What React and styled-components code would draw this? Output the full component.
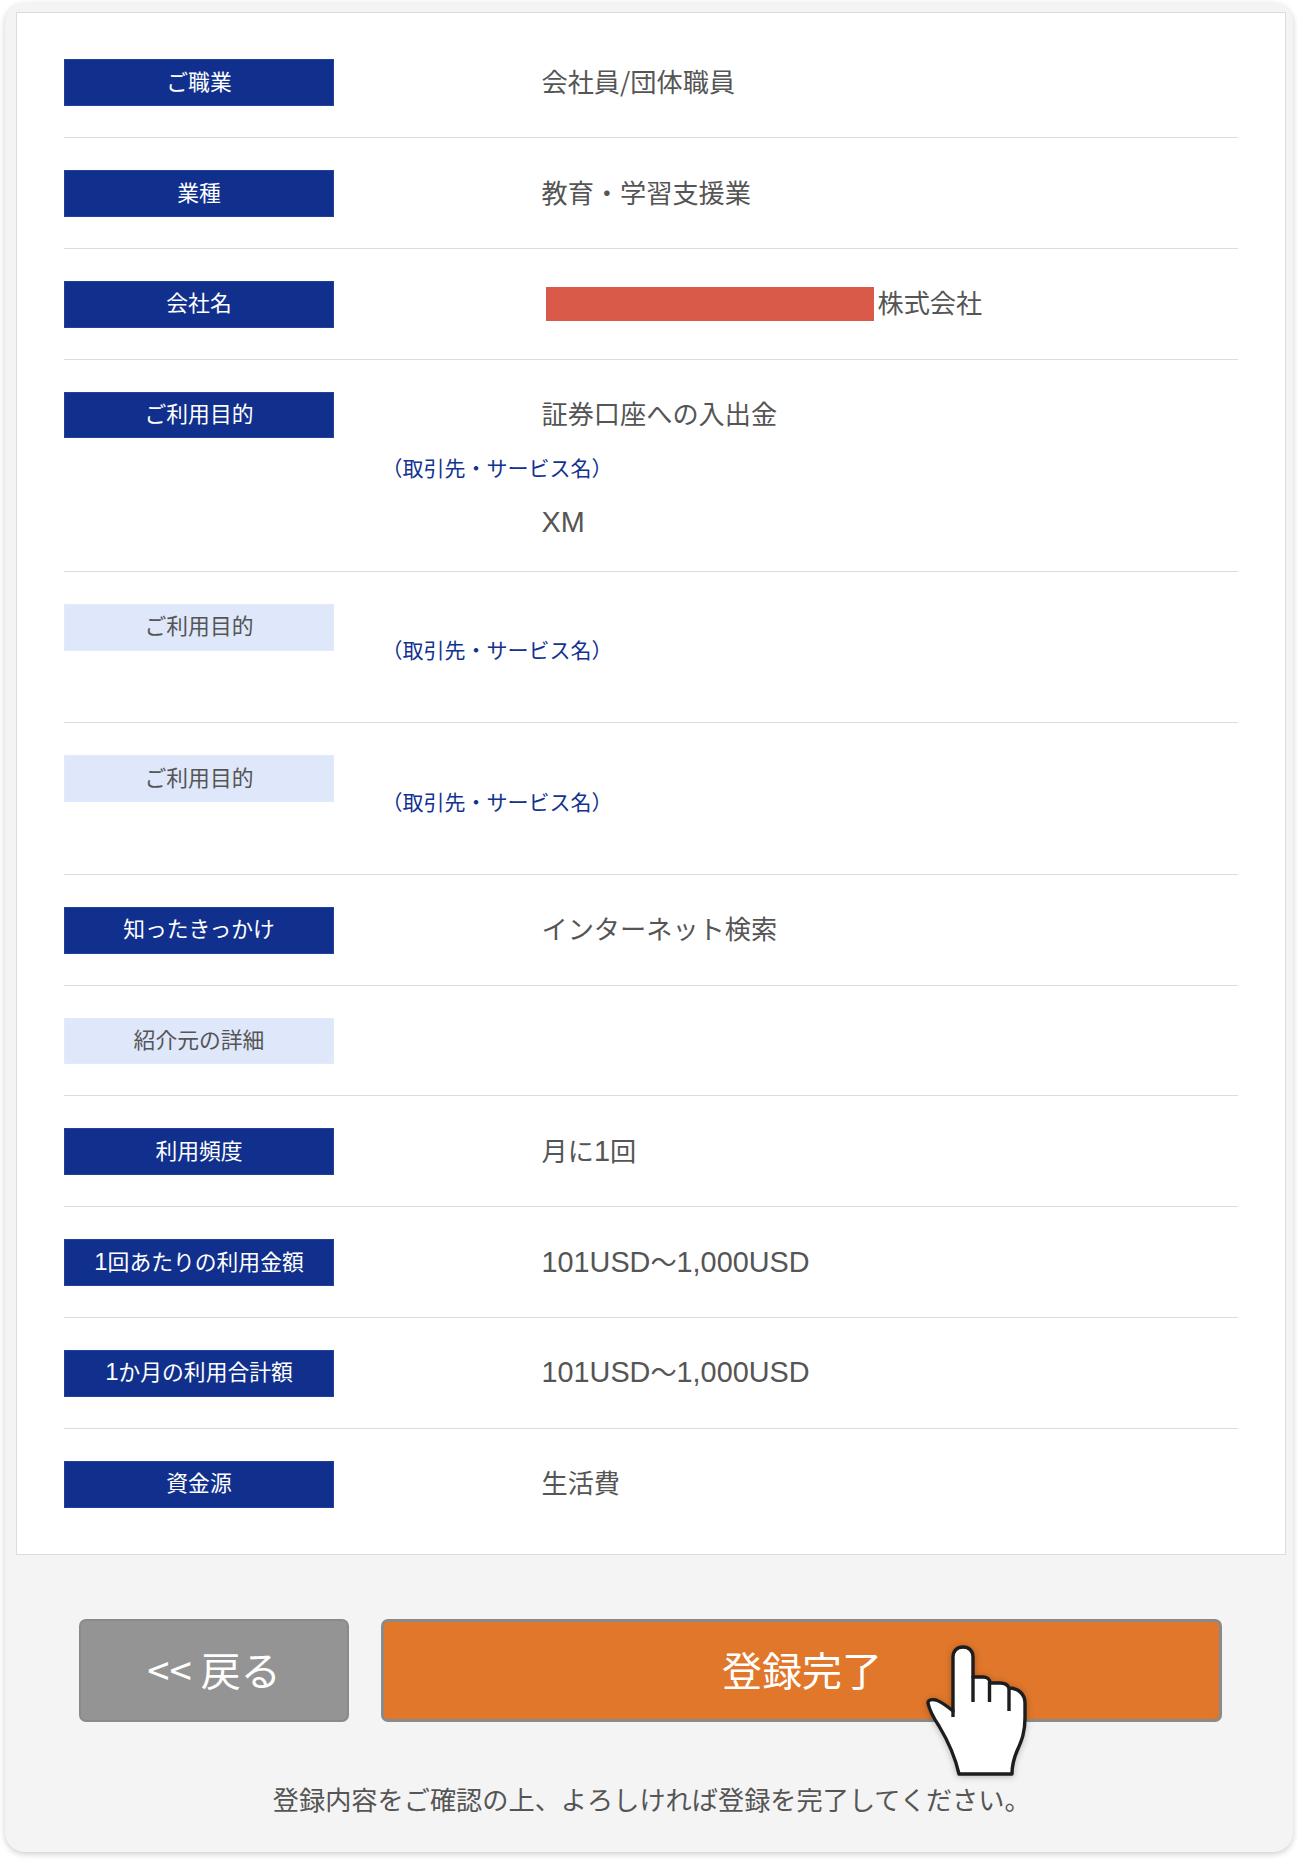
import React from "react";
import styled, { createGlobalStyle } from "styled-components";

const Global = createGlobalStyle`
  html, body { margin: 0; padding: 0; background: #fff; }
  body { font-family: "Noto Sans CJK JP", "Noto Sans", sans-serif; color: #555; }
  * { box-sizing: border-box; }
`;

const Page = styled.div`
  width: 1298px;
  padding: 3.4px 5.3px 10px 5px;
`;
const Card = styled.div`
  background: #f4f4f4;
  border-radius: 20px;
  box-shadow: 0 2px 6px rgba(0, 0, 0, 0.2);
  padding: 8.6px 7.2px 0 11px;
`;
const Sheet = styled.section`
  background: #fff;
  border: 1px solid #dcdcdc;
  padding: 14.3px 47px 15px 47px;
`;
const Row = styled.div`
  display: flex;
  padding: 32px 0 31px;
  border-bottom: 1px solid #dcdcdc;
  &:last-child { border-bottom: none; }
`;
const Label = styled.div`
  flex: none;
  width: 270px;
  height: 46.8px;
  padding-bottom: 4.8px;
  display: flex;
  align-items: center;
  justify-content: center;
  font-size: 21.8px;
  background: ${(p) => (p.$muted ? "#dfe7fb" : "#11308d")};
  color: ${(p) => (p.$muted ? "#555" : "#fff")};
  box-shadow: inset 0 0 0 1px ${(p) => (p.$muted ? "#e3eafb" : "#20409a")};
`;
const Latin = styled.span`
  font-family: "Liberation Sans", Arial, sans-serif;
  font-size: 1.1em;
`;
const Body = styled.div`
  flex: 1;
  display: flex;
  flex-direction: column;
`;
const Value = styled.div`
  height: ${(p) => (p.$short ? "35px" : "46.8px")};
  margin-left: 207.5px;
  padding-bottom: 3.8px;
  display: flex;
  align-items: center;
  font-size: 26.2px;
  color: #555;
  white-space: nowrap;
`;
const Redaction = styled.span`
  display: block;
  width: 328px;
  height: 34px;
  margin: 3.8px 3.5px 0 4.5px;
  background: #d95a48;
`;
const Sub = styled.div`
  height: 24px;
  line-height: 24px;
  margin: ${(p) => (p.$alone ? "33.3px 0 30.1px 47.5px" : "17px 0 25.5px 47.5px")};
  font-size: 21px;
  color: #12328f;
  white-space: nowrap;
`;
const Footer = styled.footer`
  padding: 64px 0 33px;
  display: flex;
  flex-direction: column;
  align-items: center;
`;
const Actions = styled.div`
  position: relative;
  align-self: flex-start;
  margin-left: 63px;
  display: flex;
  gap: 32.4px;
`;
const Button = styled.button`
  height: 103px;
  width: ${(p) => (p.$primary ? "841px" : "270px")};
  border: ${(p) => (p.$primary ? "3px solid #8a8a8a" : "2.5px solid #8a8a8a")};
  border-radius: 7px;
  background: ${(p) => (p.$primary ? "#e0772b" : "#949494")};
  color: #fff;
  font-family: inherit;
  font-size: 40px;
  padding: 0 0 2px;
`;
const Hand = styled.svg`
  position: absolute;
  left: 831px;
  top: 21.3px;
  width: 130px;
  height: 150px;
  pointer-events: none;
  filter: drop-shadow(0 1px 3px rgba(0, 0, 0, 0.25));
`;
const Note = styled.p`
  margin: 57px 0 0;
  padding-left: 2px;
  height: 40px;
  line-height: 40px;
  font-size: 26.2px;
  color: #555;
`;

const rich = (text) =>
  text.split(/([A-Za-z0-9,]+)/).map((part, i) =>
    /^[A-Za-z0-9,]+$/.test(part) ? <Latin key={i}>{part}</Latin> : part
  );

const rows = [
  { label: "ご職業", value: "会社員/団体職員" },
  { label: "業種", value: "教育・学習支援業" },
  { label: "会社名", company: "株式会社" },
  { label: "ご利用目的", value: "証券口座への入出金", sub: "（取引先・サービス名）", service: "XM" },
  { label: "ご利用目的", muted: true, subOnly: "（取引先・サービス名）" },
  { label: "ご利用目的", muted: true, subOnly: "（取引先・サービス名）" },
  { label: "知ったきっかけ", value: "インターネット検索" },
  { label: "紹介元の詳細", muted: true },
  { label: "利用頻度", value: "月に1回" },
  { label: "1回あたりの利用金額", value: "101USD〜1,000USD" },
  { label: "1か月の利用合計額", value: "101USD〜1,000USD" },
  { label: "資金源", value: "生活費" },
];

export default function App() {
  return (
    <Page>
      <Global />
      <Card>
        <Sheet>
          {rows.map((r, i) => (
            <Row key={i}>
              <Label $muted={r.muted}>
                <span>{rich(r.label)}</span>
              </Label>
              <Body>
                {r.value && (
                  <Value>
                    <span>{rich(r.value)}</span>
                  </Value>
                )}
                {r.company && (
                  <Value>
                    <Redaction />
                    <span>{r.company}</span>
                  </Value>
                )}
                {r.sub && <Sub>{r.sub}</Sub>}
                {r.service && (
                  <Value $short>
                    <span>{rich(r.service)}</span>
                  </Value>
                )}
                {r.subOnly && <Sub $alone>{r.subOnly}</Sub>}
              </Body>
            </Row>
          ))}
        </Sheet>
        <Footer>
          <Actions>
            <Button>&lt;&lt; 戻る</Button>
            <Button $primary>登録完了</Button>
            <Hand viewBox="0 0 130 150" aria-hidden="true">
              <path
                d="M49 134 L102 134 C102 125 104 118 107 111 C112 100 115 92 115 78 L115 63 C115 54 108 48 99 48 C98 45 95 43 90 43 L80 43 C80 39 77 37 73 37 L63 37 L63 17 C63 11 59 7 53 7 C47 7 43 11 43 17 L43 71 C38 67 32 62 26 60 C21 59 18 60 18 63 C19 68 23 77 29 86 C35 96 44 112 49 134 Z"
                fill="#fff"
                stroke="#1d1d1d"
                strokeWidth="3.4"
                strokeLinejoin="round"
              />
              <path
                d="M43 70 L43 77 M63 36 L63 62 M79.5 42 L79.5 62 M99 47 L99 71"
                fill="none"
                stroke="#1d1d1d"
                strokeWidth="3.4"
              />
            </Hand>
          </Actions>
          <Note>登録内容をご確認の上、よろしければ登録を完了してください。</Note>
        </Footer>
      </Card>
    </Page>
  );
}
